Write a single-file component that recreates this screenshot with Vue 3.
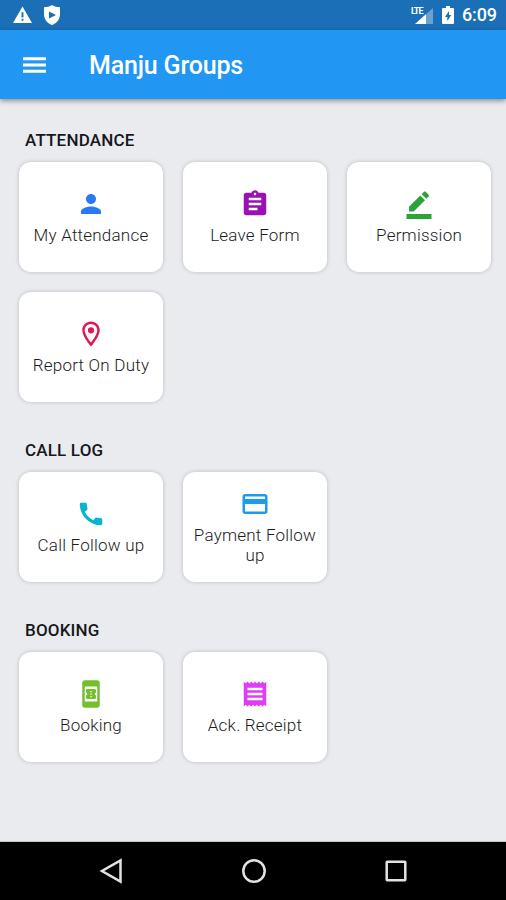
<script setup>
const sections = [
  {
    title: 'Attendance',
    items: [
      { label: 'My Attendance', tone: 'blue', path: 'M12 12c2.21 0 4-1.79 4-4s-1.79-4-4-4-4 1.79-4 4 1.79 4 4 4zm0 2c-2.67 0-8 1.34-8 4v2h16v-2c0-2.66-5.33-4-8-4z' },
      { label: 'Leave Form', tone: 'purple', path: 'M19 3h-4.18C14.4 1.84 13.3 1 12 1c-1.3 0-2.4.84-2.82 2H5c-1.1 0-2 .9-2 2v14c0 1.1.9 2 2 2h14c1.1 0 2-.9 2-2V5c0-1.1-.9-2-2-2zm-7 0c.55 0 1 .45 1 1s-.45 1-1 1-1-.45-1-1 .45-1 1-1zm2 14H7v-2h7v2zm3-4H7v-2h10v2zm0-4H7V7h10v2z' },
      { label: 'Permission', tone: 'green', path: 'M22 24H2v-4h20v4zM13.06 5.19l3.75 3.75L7.75 18H4v-3.75l9.06-9.06zM17.88 7.87l-3.75-3.75 1.83-1.83c.39-.39 1.02-.39 1.41 0l2.34 2.34c.39.39.39 1.02 0 1.41l-1.83 1.83z' },
      { label: 'Report On Duty', tone: 'red', path: 'M12 2C8.13 2 5 5.13 5 9c0 5.25 7 13 7 13s7-7.75 7-13c0-3.87-3.13-7-7-7zM7 9c0-2.76 2.24-5 5-5s5 2.24 5 5c0 2.88-2.88 7.19-5 9.88C9.92 16.21 7 11.85 7 9zM14.5 9a2.5 2.5 0 1 1-5 0 2.5 2.5 0 0 1 5 0z' },
    ],
  },
  {
    title: 'Call Log',
    items: [
      { label: 'Call Follow up', tone: 'cyan', path: 'M20.01 15.38c-1.23 0-2.42-.2-3.53-.56-.35-.12-.74-.03-1.01.24l-1.57 1.97c-2.83-1.35-5.48-3.9-6.89-6.83l1.95-1.66c.27-.28.35-.67.24-1.02-.37-1.11-.56-2.3-.56-3.53 0-.54-.45-.99-.99-.99H4.19C3.65 3 3 3.24 3 3.99 3 13.28 10.73 21 20.01 21c.71 0 .99-.63.99-1.18v-3.45c0-.54-.45-.99-.99-.99z' },
      { label: 'Payment Follow up', tone: 'sky', path: 'M20 4H4c-1.11 0-1.99.89-1.99 2L2 18c0 1.11.89 2 2 2h16c1.11 0 2-.89 2-2V6c0-1.11-.89-2-2-2zm0 14H4v-6h16v6zm0-10H4V6h16v2z' },
    ],
  },
  {
    title: 'Booking',
    items: [
      { label: 'Booking', tone: 'lime', path: 'M17 1H7c-1.1 0-2 .9-2 2v18c0 1.1.9 2 2 2h10c1.1 0 2-.9 2-2V3c0-1.1-.9-2-2-2zM7 18V6h10v12H7zm9-7V9.14C16 8.51 15.55 8 15 8H9c-.55 0-1 .51-1 1.14V11c.55 0 1 .45 1 1s-.45 1-1 1v1.86c0 .63.45 1.14 1 1.14h6c.55 0 1-.51 1-1.14V13c-.55 0-1-.45-1-1s.45-1 1-1zm-3.5 3.5h-1v-1h1v1zm0-2h-1v-1h1v1zm0-2h-1v-1h1v1z' },
      { label: 'Ack. Receipt', tone: 'pink', path: 'M18 17H6v-2h12v2zm0-4H6v-2h12v2zm0-4H6V7h12v2zM3 22l1.5-1.5L6 22l1.5-1.5L9 22l1.5-1.5L12 22l1.5-1.5L15 22l1.5-1.5L18 22l1.5-1.5L21 22V2l-1.5 1.5L18 2l-1.5 1.5L15 2l-1.5 1.5L12 2l-1.5 1.5L9 2 7.5 3.5 6 2 4.5 3.5 3 2v20z' },
    ],
  },
]
</script>

<template>
  <div class="screen">
    <div class="status">
      <svg class="warning" viewBox="0 0 20 18"><path fill-rule="evenodd" d="M10 0 20 17.500H0zM9 6v5.500h2V6zm0 7v2h2v-2z" /></svg>
      <svg class="shield" viewBox="0 0 18 20"><path fill-rule="evenodd" d="M9 0c2.500 1.500 5 2.200 8 2.300V9c0 5.500-3.300 9.200-8 11-4.700-1.800-8-5.500-8-11V2.300C4 2.200 6.500 1.500 9 0zM6 6.500v7l7-3.500z" /></svg>
      <span class="spacer"></span>
      <div class="signal">
        <span class="lte">LTE</span>
        <svg viewBox="0 0 18 16"><path d="M18 0v16H0z" opacity=".35" /><path d="M11 6.200V16H0z" /></svg>
      </div>
      <svg class="battery" viewBox="0 0 12 18"><path fill-rule="evenodd" d="M4 0h4v2h3q1 0 1 1v14q0 1-1 1H1q-1 0-1-1V3q0-1 1-1h3zM7 5l-4 6h2.300v4l4-6H7z" /></svg>
      <span class="clock">6:09</span>
    </div>

    <header class="appbar">
      <svg class="menu" viewBox="0 0 24 16"><path d="M0 0h24v3H0zM0 6.500h24v3H0zM0 13h24v3H0z" /></svg>
      <h1>Manju Groups</h1>
    </header>

    <main>
      <section v-for="section in sections" :key="section.title">
        <h2>{{ section.title }}</h2>
        <div class="grid">
          <div v-for="item in section.items" :key="item.label" class="card">
            <svg class="icon" :class="item.tone" viewBox="0 0 24 24"><path :d="item.path" /></svg>
            <span class="label">{{ item.label }}</span>
          </div>
        </div>
      </section>
    </main>

    <nav>
      <svg viewBox="0 0 26 26"><path d="M21.500 2.500v21L3 13z" /></svg>
      <svg viewBox="0 0 26 26"><circle cx="13" cy="13" r="10.700" /></svg>
      <svg viewBox="0 0 26 26"><rect x="3.700" y="3.700" width="18.600" height="18.600" rx=".5" /></svg>
    </nav>
  </div>
</template>

<style>
body {
  margin: 0;
}
</style>

<style scoped>
.screen {
  display: flex;
  flex-direction: column;
  width: 506px;
  height: 900px;
  overflow: hidden;
  background: #e9ebef;
  font-family: Roboto, sans-serif;
}
.status {
  display: flex;
  align-items: center;
  flex: none;
  height: 30px;
  box-sizing: border-box;
  padding: 0 9px 0 13px;
  background: #1a6fb6;
  color: #fff;
}
.status svg {
  fill: #fff;
}
.warning {
  width: 19px;
  height: 18px;
}
.shield {
  width: 18px;
  height: 20px;
  margin-left: 11px;
}
.spacer {
  flex: 1;
}
.signal {
  position: relative;
  display: flex;
  justify-content: flex-end;
  align-items: flex-end;
  width: 22px;
  height: 17px;
}
.signal svg {
  width: 18px;
  height: 16px;
}
.lte {
  position: absolute;
  left: 0;
  top: 0;
  font-size: 9px;
  font-weight: 700;
  line-height: 8px;
  letter-spacing: -1px;
}
.battery {
  width: 12px;
  height: 18px;
  margin-left: 9px;
}
.clock {
  margin-left: 8px;
  font-size: 18px;
  font-weight: 500;
  line-height: 30px;
  letter-spacing: -0.1px;
}
.appbar {
  position: relative;
  display: flex;
  align-items: center;
  flex: none;
  height: 69px;
  padding-left: 23px;
  background: #2196f3;
  box-shadow: 0 2px 5px rgba(0, 0, 0, 0.4);
}
.menu {
  width: 23px;
  height: 16px;
  fill: #fff;
}
h1 {
  margin: 2px 0 0 43px;
  color: #fff;
  font-size: 25px;
  font-weight: 500;
  line-height: 30px;
  letter-spacing: -0.18px;
}
main {
  flex: 1;
  padding: 30px 0 0 19px;
  box-shadow: inset 0 -1px 0 #c4c6c9;
}
section {
  margin-bottom: 37px;
}
h2 {
  margin: 0 0 11px 6px;
  color: #17181a;
  font-size: 17px;
  font-weight: 500;
  line-height: 22px;
  letter-spacing: 0.18px;
  text-transform: uppercase;
}
.grid {
  display: grid;
  grid-template-columns: repeat(3, 144px);
  grid-auto-rows: 110px;
  gap: 20px;
}
.card {
  display: flex;
  flex-direction: column;
  align-items: center;
  justify-content: center;
  gap: 6px;
  border-radius: 12px;
  background: #fff;
  box-shadow: 0 0 4px rgba(0, 0, 0, 0.2);
}
.icon {
  flex: none;
  width: 30px;
  height: 30px;
}
.label {
  width: 130px;
  color: #1c1c1c;
  font-size: 17px;
  font-weight: 300;
  line-height: 20px;
  letter-spacing: 0.22px;
  text-align: center;
}
.blue { fill: #2979f5; }
.purple { fill: #9a10b4; }
.green { fill: #2ba337; }
.red { fill: #e3174f; }
.cyan { fill: #08b5ca; }
.sky { fill: #1e9beb; }
.lime { fill: #72c02c; }
.pink { fill: #e03cf5; }
nav {
  display: flex;
  align-items: center;
  justify-content: space-between;
  flex: none;
  height: 58px;
  box-sizing: border-box;
  padding: 0 97px 0 99px;
  background: #000;
}
nav svg {
  width: 26px;
  height: 26px;
  fill: none;
  stroke: #e2e2e2;
  stroke-width: 2.5;
}
</style>
